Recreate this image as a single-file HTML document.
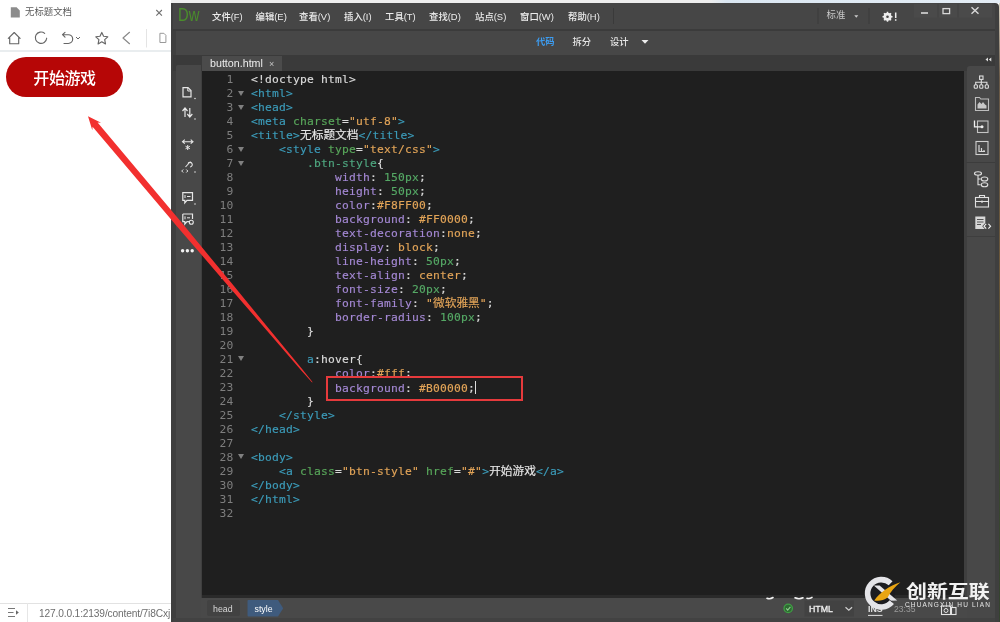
<!DOCTYPE html>
<html lang="zh-CN">
<head>
<meta charset="utf-8">
<title>无标题文档</title>
<style>
*{box-sizing:border-box;margin:0;padding:0}
html,body{width:1000px;height:622px;overflow:hidden;background:#fff}
body{position:relative;font-family:"Liberation Sans","Noto Sans CJK SC",sans-serif;font-size:12px;will-change:transform}
.abs,.x{position:absolute}
.x{white-space:nowrap}
svg{position:absolute;overflow:visible}
/* browser */
#tabt{left:25px;top:5px;font-size:9.4px;color:#5a5a5a;line-height:14px}
#navline{left:0;top:50px;width:171px;height:1.5px;background:#e9edef}
#btn{left:6px;top:57.4px;width:117px;height:39.4px;border-radius:20px;background:#b60606;color:#fff;font-size:16px;font-weight:500;line-height:39.4px;text-align:center;letter-spacing:-0.4px;padding-top:1.8px}
#stline{left:0;top:603px;width:171px;height:1px;background:#e2e2e2}
#stsep{left:27px;top:603px;width:1px;height:19px;background:#e6e6e6}
#sturl{left:39px;top:606.8px;font-size:10.2px;line-height:14px;color:#6e6e6e;letter-spacing:-0.15px}
/* dreamweaver */
#dwo{left:171px;top:2.5px;width:827.5px;height:620px;background:#3f3f3f;border-radius:0 4px 0 0}
#menu{left:173px;top:3px;width:822px;height:25.5px;background:#464646;border-radius:0 3px 0 0}
.m{top:9.5px;font-size:9.4px;line-height:14px;color:#ececec;font-weight:500}
#logo{left:178px;top:3px;font-size:19px;line-height:24px;color:#4a8c2c;transform:scaleX(.78);transform-origin:0 0}
#tool{left:175.5px;top:30.5px;width:819.5px;height:24px;background:#474747}
.tb{top:34.5px;font-size:9.3px;line-height:14px;color:#e6e6e6;font-weight:500}
#tabbar{left:173px;top:54.5px;width:822px;height:16px;background:#3a3a3a}
#tab{left:202px;top:56px;width:80px;height:14.5px;background:#4b4b4b;color:#ececec;font-size:10.7px;line-height:14.5px;padding-left:8px}
#left{left:175.5px;top:64.7px;width:25.5px;height:557px;background:#484848;border-radius:2px 0 0 0}
#right{left:966.5px;top:65.5px;width:28.5px;height:552.5px;background:#484848;border-radius:3px 0 0 0}
#code{left:201.5px;top:70.5px;width:762.5px;height:526px;background:#1f1f1f;overflow:hidden;font-family:"DejaVu Sans Mono","Liberation Mono","Noto Sans CJK SC",monospace;font-size:11.3px;letter-spacing:0.2px;-webkit-text-stroke:0.15px currentColor}
.ln{position:absolute;left:0;width:762px;height:14px;line-height:14px;white-space:pre}
.no{position:absolute;left:0;width:32px;text-align:right;color:#7e7e7e;-webkit-text-stroke:0}
.cd{position:absolute;top:0;white-space:pre}
.fold{position:absolute;left:36.5px;top:3.7px;width:0;height:0;border-left:3.7px solid transparent;border-right:3.7px solid transparent;border-top:5.4px solid #808080}
.t{color:#3c9cba}.a{color:#58a65a}.s{color:#e2a458}.w{color:#dadada}.p{color:#a488d4}.n{color:#55a865}.v{color:#e2a458}.c{color:#4fa880}
.z,.zs{color:#e8e8e8;font-family:"Noto Sans CJK SC",sans-serif;font-size:11.7px;letter-spacing:0;display:inline-block;height:14px;line-height:14px;vertical-align:top;overflow:hidden;position:relative;top:-1.5px}
.zs{color:#e2a458}
.cur{display:inline-block;width:1px;height:13px;background:#ddd;vertical-align:-2px}
#codeb{left:201.5px;top:595px;width:763px;height:3px;background:#2a2a2a}
#status{left:201px;top:598px;width:765.5px;height:20px;background:#494949}
#bot{left:173px;top:618px;width:822px;height:4px;background:#424242}
.st{font-size:8.8px;line-height:14px}
#rect{left:325.5px;top:376px;width:197.5px;height:25px;border:2px solid #e63a3c}
#wm{left:905.5px;top:579.5px;font-size:18.6px;font-weight:bold;color:#f2f2f2;line-height:24px;transform:scaleX(1.125);transform-origin:0 0}
#wm2{left:905px;top:601.3px;font-size:6.5px;color:#e6e6e6;line-height:8px;letter-spacing:1.15px}
</style>
</head>
<body>
<!-- browser -->
<svg style="left:0;top:0" width="171" height="56" viewBox="0 0 171 56" fill="none">
  <path d="M10.800 7.300h5.800l3.200 3.200v7h-9z" fill="#8c8c8c"/>
  <path d="M156.300 10l5.600 5.600M161.900 10l-5.600 5.600" stroke="#707070" stroke-width="1.100"/>
  <g stroke="#666" stroke-width="1.150" stroke-linejoin="round" stroke-linecap="round">
    <path d="M8.300 38.300L14.200 32.500l5.900 5.800M9.700 37.500v6.200h9v-6.200"/>
    <path d="M44.660 33.330A5.700 5.700 0 1 0 46.680 38.200"/>
    <path d="M62.600 34.700h5.700a4.400 4.400 0 0 1 0 8.800h-4.300M65 32.300l-2.500 2.400 2.500 2.400"/>
    <path d="M76.300 37.300l1.700 1.700 1.700-1.700" stroke-width="1"/>
    <path d="M101.800 32.400l1.800 3.900 4.200.5-3.100 2.900.8 4.200-3.700-2.100-3.700 2.100.8-4.200-3.100-2.900 4.200-.5z"/>
    <path d="M129.500 32.300l-6.500 5.700 6.500 5.700" stroke="#888"/>
    <path d="M160.300 33.300h3.600l2 2v7.200h-5.600z" stroke="#999" stroke-width="1"/>
  </g>
  <path d="M146.500 29v18.500" stroke="#e4e4e4" stroke-width="1"/>
</svg>
<div class="x" id="tabt">无标题文档</div>
<div class="abs" id="navline"></div>
<div class="x" id="btn">开始游戏</div>
<div class="abs" id="stline"></div>
<div class="abs" id="stsep"></div>
<svg style="left:8px;top:607px" width="12" height="11" viewBox="0 0 12 11" fill="none" stroke="#777" stroke-width="1"><path d="M0 1.500h7M0 5.500h5.500M0 9.500h7"/><path d="M8 3.300l2.800 2.200L8 7.700z" fill="#666" stroke="none"/></svg>
<div class="x" id="sturl">127.0.0.1:2139/content/7i8Cxj</div>
<!-- desktop strips -->
<div class="abs" style="left:171px;top:0;width:829px;height:3px;background:linear-gradient(90deg,#eee 0,#eee 65%,#dbe7f2 67%,#e4edf5 100%)"></div>
<div class="abs" style="left:998.5px;top:3px;width:1.5px;height:619px;background:linear-gradient(#d8d0c0 0,#6a5a48 12%,#6a5638 45%,#3e4a30 60%,#34422e 100%)"></div>
<!-- dreamweaver -->
<div class="abs" id="dwo"></div>
<div class="abs" id="menu"></div>
<div class="abs" style="left:173px;top:28.5px;width:822px;height:2px;background:#3b3b3b"></div>
<div class="x" id="logo">Dw</div>
<div class="x m" style="left:212px">文件(F)</div>
<div class="x m" style="left:255.500px">编辑(E)</div>
<div class="x m" style="left:299px">查看(V)</div>
<div class="x m" style="left:344px">插入(I)</div>
<div class="x m" style="left:385px">工具(T)</div>
<div class="x m" style="left:429px">查找(D)</div>
<div class="x m" style="left:475px">站点(S)</div>
<div class="x m" style="left:520px">窗口(W)</div>
<div class="x m" style="left:568px">帮助(H)</div>
<div class="x m" style="left:826.500px;top:8px;color:#c8c8c8;font-weight:400">标准</div>
<div class="abs" id="tool"></div>
<div class="x tb" style="left:536px;color:#3d9cf0;font-weight:700">代码</div>
<div class="x tb" style="left:572.500px">拆分</div>
<div class="x tb" style="left:610px">设计</div>
<svg style="left:171px;top:0" width="829" height="60" viewBox="171 0 829 60" fill="none">
  <path d="M641.500 40h7l-3.500 3.800z" fill="#eee"/>
  <path d="M613.500 8v16M818 8v16M869 8v16" stroke="#3a3a3a" stroke-width="1"/>
  <path d="M854.300 15.200h4l-2 2.500z" fill="#ccc"/>
  <rect x="914" y="4" width="78" height="13.500" fill="#4a4a4a"/>
  <path d="M938 4v13.500M958 4v13.500" stroke="#404040" stroke-width="1"/>
  <path d="M921 13h7" stroke="#d8d8d8" stroke-width="1.600"/>
  <rect x="943" y="8.600" width="6.600" height="5" stroke="#d8d8d8" stroke-width="1.300"/>
  <path d="M971.500 7.300l7 6.500M978.500 7.300l-7 6.500" stroke="#d8d8d8" stroke-width="1.400"/>
  <g transform="translate(887.500 16.700)">
    <circle r="3" stroke="#eee" stroke-width="2"/>
    <path d="M0-5v10M-5 0h10M-3.500-3.500l7 7M3.500-3.500l-7 7" stroke="#eee" stroke-width="1.500"/>
    <circle r="1.300" fill="#454545"/>
  </g>
  <path d="M895.700 12.500v5.500M895.700 19.300v1.500" stroke="#eee" stroke-width="1.500"/>
</svg>
<div class="abs" id="tabbar"></div>
<div class="x" id="tab">button.html<span style="color:#c4c4c4;font-size:9px;margin-left:6px">×</span></div>
<svg style="left:980px;top:55px" width="15" height="10" viewBox="980 55 15 10"><path d="M988 57.500v4l-2.500-2zM991.300 57.500v4l-2.500-2z" fill="#ddd"/></svg>
<div class="abs" id="left"></div>
<div class="abs" id="right"></div>
<svg style="left:171px;top:80px" width="32" height="180" viewBox="171 80 32 180" fill="none" stroke="#e8e8e8" stroke-width="1.200">
  <path d="M183 87.600h5l3 3v6.300h-8z"/><path d="M187.800 87.800v3.200h3" stroke-width="1"/>
  <circle cx="195" cy="98.500" r=".8" fill="#ddd" stroke="none"/>
  <path d="M185 117v-8M182.500 111l2.500-3 2.500 3M189.800 108v8M187.300 114l2.500 3 2.500-3"/>
  <circle cx="195" cy="119" r=".8" fill="#ddd" stroke="none"/>
  <path d="M183.500 141.700h8.500M184.800 139.700l-2.300 2 2.300 2M190.700 139.700l2.300 2-2.300 2" stroke-width="1.100"/>
  <path d="M187.700 145v5M185.500 146.200l4.400 2.600M189.900 146.200l-4.400 2.600" stroke-width="1"/>
  <path d="M185.500 167l5-5.500M188 163.500a2.300 2.300 0 1 1 2 3.500" stroke-width="1.100"/>
  <path d="M183.200 169.500l-1.500 1.500 1.500 1.500M186.300 169.500l1.500 1.500-1.500 1.500" stroke-width="1"/>
  <circle cx="195" cy="172" r=".8" fill="#ddd" stroke="none"/>
  <path d="M182.800 192.700h9.700v7.600h-5.500l-2.200 2.500v-2.500h-2z"/><path d="M185 195v3M187 196.500h3.500" stroke-width="1"/>
  <circle cx="195" cy="204" r=".8" fill="#ddd" stroke="none"/>
  <path d="M182.800 214h9.700v5M189 221.600h-2l-2.200 2.500v-2.500h-2V214"/><path d="M185 216.300v3M187 217.800h3" stroke-width="1"/>
  <circle cx="191.300" cy="222.300" r="2" stroke-width="1.100"/>
  <circle cx="182.600" cy="250.800" r="1.700" fill="#f2f2f2" stroke="none"/><circle cx="187.400" cy="250.800" r="1.700" fill="#f2f2f2" stroke="none"/><circle cx="192.200" cy="250.800" r="1.700" fill="#f2f2f2" stroke="none"/>
</svg>
<svg style="left:966px;top:70px" width="30" height="170" viewBox="966 70 30 170" fill="none" stroke="#e0e0e0" stroke-width="1.100">
  <rect x="979.600" y="76" width="3.400" height="3.400"/><path d="M981.300 79.500v2.700M975.700 84.500v-2.300h11.200v2.300M981.300 82.200v2.300"/>
  <rect x="974.200" y="84.800" width="3.200" height="3.400" rx="1"/><rect x="979.700" y="84.800" width="3.200" height="3.400" rx="1"/><rect x="985.200" y="84.800" width="3.200" height="3.400" rx="1"/>
  <path d="M975.500 97.500h4l1.300 1.500h7.700v11.500h-13z" stroke="#bdbdbd"/><path d="M977.500 108.500v-4l2-2.500 2 2 1.500-2 2 2.500 1.500 1v3z" fill="#c8c8c8" stroke="none"/>
  <rect x="977.500" y="121" width="10.500" height="11.500" stroke="#c4c4c4"/><path d="M974.500 120.500v6.300h7" stroke="#f0f0f0" stroke-width="1.300"/><circle cx="982" cy="126.800" r="1.500" fill="#f0f0f0" stroke="none"/>
  <rect x="976" y="141.500" width="12" height="13" stroke="#d0d0d0"/><path d="M979 145v6.500h6M981.500 148v3.500M984 150v1.500" stroke="#d8d8d8" stroke-width="1.200"/>
  <path d="M966 162.500h29" stroke="#3c3c3c" stroke-width="1"/>
  <ellipse cx="978" cy="173.500" rx="3.500" ry="1.700"/><path d="M978 175.200v9.500h2.500M978 179h2.500"/><ellipse cx="984.500" cy="179" rx="3.300" ry="2"/><ellipse cx="984.500" cy="184.700" rx="3.300" ry="2"/>
  <rect x="975.500" y="197.500" width="13" height="9.500"/><path d="M979.500 197.500v-2h5v2M975.500 201.500h13M982 200.500v2.500"/>
  <path d="M975.300 216.500h10v12.500h-10z" fill="#d8d8d8" stroke="none"/><path d="M977 219.500h6.500M977 222h6.500M977 224.500h4" stroke="#555" stroke-width="1"/>
  <path d="M986.2 223.8l-2.2 2.4 2.2 2.4M988.4 223.8l2.2 2.4-2.2 2.4" stroke="#484848" stroke-width="2.6"/><path d="M986.2 223.8l-2.2 2.4 2.2 2.4M988.4 223.8l2.2 2.4-2.2 2.4" stroke="#f0f0f0" stroke-width="1.1"/>
  <path d="M966 236.500h29" stroke="#3e3e3e" stroke-width="1"/>
</svg>
<div class="abs" id="code">
<div class="ln" style="top:2.40px"><span class="no">1</span><span class="cd" style="left:49.5px"><span class="w">&lt;!doctype html&gt;</span></span></div>
<div class="ln" style="top:16.39px"><span class="no">2</span><b class="fold"></b><span class="cd" style="left:49.5px"><span class="t">&lt;html&gt;</span></span></div>
<div class="ln" style="top:30.38px"><span class="no">3</span><b class="fold"></b><span class="cd" style="left:49.5px"><span class="t">&lt;head&gt;</span></span></div>
<div class="ln" style="top:44.37px"><span class="no">4</span><span class="cd" style="left:49.5px"><span class="t">&lt;meta </span><span class="a">charset</span><span class="w">=</span><span class="s">"utf-8"</span><span class="t">&gt;</span></span></div>
<div class="ln" style="top:58.36px"><span class="no">5</span><span class="cd" style="left:49.5px"><span class="t">&lt;title&gt;</span><span class="z">无标题文档</span><span class="t">&lt;/title&gt;</span></span></div>
<div class="ln" style="top:72.35px"><span class="no">6</span><b class="fold"></b><span class="cd" style="left:77.5px"><span class="t">&lt;style </span><span class="a">type</span><span class="w">=</span><span class="s">"text/css"</span><span class="t">&gt;</span></span></div>
<div class="ln" style="top:86.34px"><span class="no">7</span><b class="fold"></b><span class="cd" style="left:105.5px"><span class="c">.btn-style</span><span class="w">{</span></span></div>
<div class="ln" style="top:100.33px"><span class="no">8</span><span class="cd" style="left:133.5px"><span class="p">width</span><span class="w">: </span><span class="n">150px</span><span class="w">;</span></span></div>
<div class="ln" style="top:114.32px"><span class="no">9</span><span class="cd" style="left:133.5px"><span class="p">height</span><span class="w">: </span><span class="n">50px</span><span class="w">;</span></span></div>
<div class="ln" style="top:128.31px"><span class="no">10</span><span class="cd" style="left:133.5px"><span class="p">color</span><span class="w">:</span><span class="v">#F8FF00</span><span class="w">;</span></span></div>
<div class="ln" style="top:142.30px"><span class="no">11</span><span class="cd" style="left:133.5px"><span class="p">background</span><span class="w">: </span><span class="v">#FF0000</span><span class="w">;</span></span></div>
<div class="ln" style="top:156.29px"><span class="no">12</span><span class="cd" style="left:133.5px"><span class="p">text-decoration</span><span class="w">:</span><span class="v">none</span><span class="w">;</span></span></div>
<div class="ln" style="top:170.28px"><span class="no">13</span><span class="cd" style="left:133.5px"><span class="p">display</span><span class="w">: </span><span class="v">block</span><span class="w">;</span></span></div>
<div class="ln" style="top:184.27px"><span class="no">14</span><span class="cd" style="left:133.5px"><span class="p">line-height</span><span class="w">: </span><span class="n">50px</span><span class="w">;</span></span></div>
<div class="ln" style="top:198.26px"><span class="no">15</span><span class="cd" style="left:133.5px"><span class="p">text-align</span><span class="w">: </span><span class="v">center</span><span class="w">;</span></span></div>
<div class="ln" style="top:212.25px"><span class="no">16</span><span class="cd" style="left:133.5px"><span class="p">font-size</span><span class="w">: </span><span class="n">20px</span><span class="w">;</span></span></div>
<div class="ln" style="top:226.24px"><span class="no">17</span><span class="cd" style="left:133.5px"><span class="p">font-family</span><span class="w">: </span><span class="s">"</span><span class="zs">微软雅黑</span><span class="s">"</span><span class="w">;</span></span></div>
<div class="ln" style="top:240.23px"><span class="no">18</span><span class="cd" style="left:133.5px"><span class="p">border-radius</span><span class="w">: </span><span class="n">100px</span><span class="w">;</span></span></div>
<div class="ln" style="top:254.22px"><span class="no">19</span><span class="cd" style="left:105.5px"><span class="w">}</span></span></div>
<div class="ln" style="top:268.21px"><span class="no">20</span><span class="cd" style="left:49.5px"></span></div>
<div class="ln" style="top:282.20px"><span class="no">21</span><b class="fold"></b><span class="cd" style="left:105.5px"><span class="t">a</span><span class="w">:hover{</span></span></div>
<div class="ln" style="top:296.19px"><span class="no">22</span><span class="cd" style="left:133.5px"><span class="p">color</span><span class="w">:</span><span class="v">#fff</span><span class="w">;</span></span></div>
<div class="ln" style="top:310.18px"><span class="no">23</span><span class="cd" style="left:133.5px"><span class="p">background</span><span class="w">: </span><span class="v">#B00000</span><span class="w">;</span><i class="cur"></i></span></div>
<div class="ln" style="top:324.17px"><span class="no">24</span><span class="cd" style="left:105.5px"><span class="w">}</span></span></div>
<div class="ln" style="top:338.16px"><span class="no">25</span><span class="cd" style="left:77.5px"><span class="t">&lt;/style&gt;</span></span></div>
<div class="ln" style="top:352.15px"><span class="no">26</span><span class="cd" style="left:49.5px"><span class="t">&lt;/head&gt;</span></span></div>
<div class="ln" style="top:366.14px"><span class="no">27</span><span class="cd" style="left:49.5px"></span></div>
<div class="ln" style="top:380.13px"><span class="no">28</span><b class="fold"></b><span class="cd" style="left:49.5px"><span class="t">&lt;body&gt;</span></span></div>
<div class="ln" style="top:394.12px"><span class="no">29</span><span class="cd" style="left:77.5px"><span class="t">&lt;a </span><span class="a">class</span><span class="w">=</span><span class="s">"btn-style"</span><span class="w"> </span><span class="a">href</span><span class="w">=</span><span class="s">"#"</span><span class="t">&gt;</span><span class="z">开始游戏</span><span class="t">&lt;/a&gt;</span></span></div>
<div class="ln" style="top:408.11px"><span class="no">30</span><span class="cd" style="left:49.5px"><span class="t">&lt;/body&gt;</span></span></div>
<div class="ln" style="top:422.10px"><span class="no">31</span><span class="cd" style="left:49.5px"><span class="t">&lt;/html&gt;</span></span></div>
<div class="ln" style="top:436.09px"><span class="no">32</span><span class="cd" style="left:49.5px"></span></div>
</div>
<div class="abs" id="codeb"></div>
<div class="abs" id="status"></div>
<div class="abs" id="bot"></div>
<div class="abs" style="left:206.500px;top:600px;width:33.500px;height:16px;background:#424242;border-radius:2px"></div>
<div class="x st" style="left:213px;top:601.500px;color:#d8d8d8">head</div>
<svg style="left:247px;top:599px" width="40" height="19" viewBox="247 599 40 19"><path d="M248.500 600h29.500l5.200 8.200-5.200 8.300h-29.500a1 1 0 0 1-1-1v-14.500a1 1 0 0 1 1-1z" fill="#3f5b7d"/></svg>
<div class="x st" style="left:254.500px;top:601.500px;color:#fff">style</div>
<svg style="left:760px;top:594px" width="236" height="28" viewBox="760 594 236 28" fill="none">
  <path d="M767 598.300q3 1.200 6-.8M795 597.800q4 1.800 8 0M807 598.200q2.500 .8 5-.8" stroke="#f4f4f4" stroke-width="1.600" stroke-linecap="round"/>
  <circle cx="788.200" cy="608.400" r="4.200" stroke="#3fa044" stroke-width="1.300" fill="#2f6a33"/><path d="M786.200 608.400l1.500 1.700 2.700-3.200" stroke="#8fd08f" stroke-width="1.100"/>
  <rect x="804.500" y="600.500" width="49.500" height="16" fill="#424242"/>
  <path d="M845.500 607.300l3.300 3 3.300-3" stroke="#d0d0d0" stroke-width="1.200"/>
  <path d="M868 615.400h14.500" stroke="#e0e0e0" stroke-width="1"/>
  <rect x="941.500" y="606" width="9" height="8.500" stroke="#e4e4e4" stroke-width="1.100"/><rect x="951.500" y="607.500" width="4.500" height="7" stroke="#e4e4e4" stroke-width="1.100" fill="#494949"/><circle cx="946" cy="610.500" r="2" stroke="#e4e4e4" stroke-width="1"/>
</svg>
<div class="x st" style="left:809px;top:601.600px;color:#f0f0f0;font-size:8.8px;-webkit-text-stroke:0.3px currentColor">HTML</div>
<div class="x st" style="left:868px;top:601.500px;color:#e4e4e4;font-weight:700;font-size:8.8px">INS</div>
<div class="x st" style="left:894px;top:601.500px;color:#9a9a9a;font-size:8.6px">23:35</div>
<div class="abs" id="rect"></div>
<svg style="left:0;top:0" width="1000" height="622" viewBox="0 0 1000 622">
  <path d="M88.0 116.2 L101.1 122.8 L97.6 122.5 L182.0 223.1 L231.9 283.6 L260.9 319.0 L302.5 369.5 L312.5 382.1 L312.1 382.5 L301.3 370.5 L258.6 321.0 L228.7 286.4 L177.5 226.9 L92.6 126.7 L92.3 130.2Z" fill="#f2302f"/>
</svg>
<svg style="left:860px;top:572px" width="50" height="44" viewBox="860 572 50 44" fill="none">
  <circle cx="881.3" cy="593.3" r="13.5" fill="#1c1c20"/>
  <path d="M890.64 583.28A13.7 13.7 0 1 0 891.79 602.11" stroke="#e4e4e8" stroke-width="5.6"/>
  <path d="M873.8 585.4l5.8 .2 17.6 14.8-6.2 .4z" fill="#e4e4e8"/>
  <path d="M874.2 600.4C880 593 889 585.6 900.4 582.3C895 586.6 890.2 592 887.6 597.6C883.4 600.6 878.6 601.4 874.2 600.4Z" fill="#e9a512"/>
</svg>
<div class="x" id="wm">创新互联</div>
<div class="x" id="wm2">CHUANGXIN HU LIAN</div>
</body>
</html>
